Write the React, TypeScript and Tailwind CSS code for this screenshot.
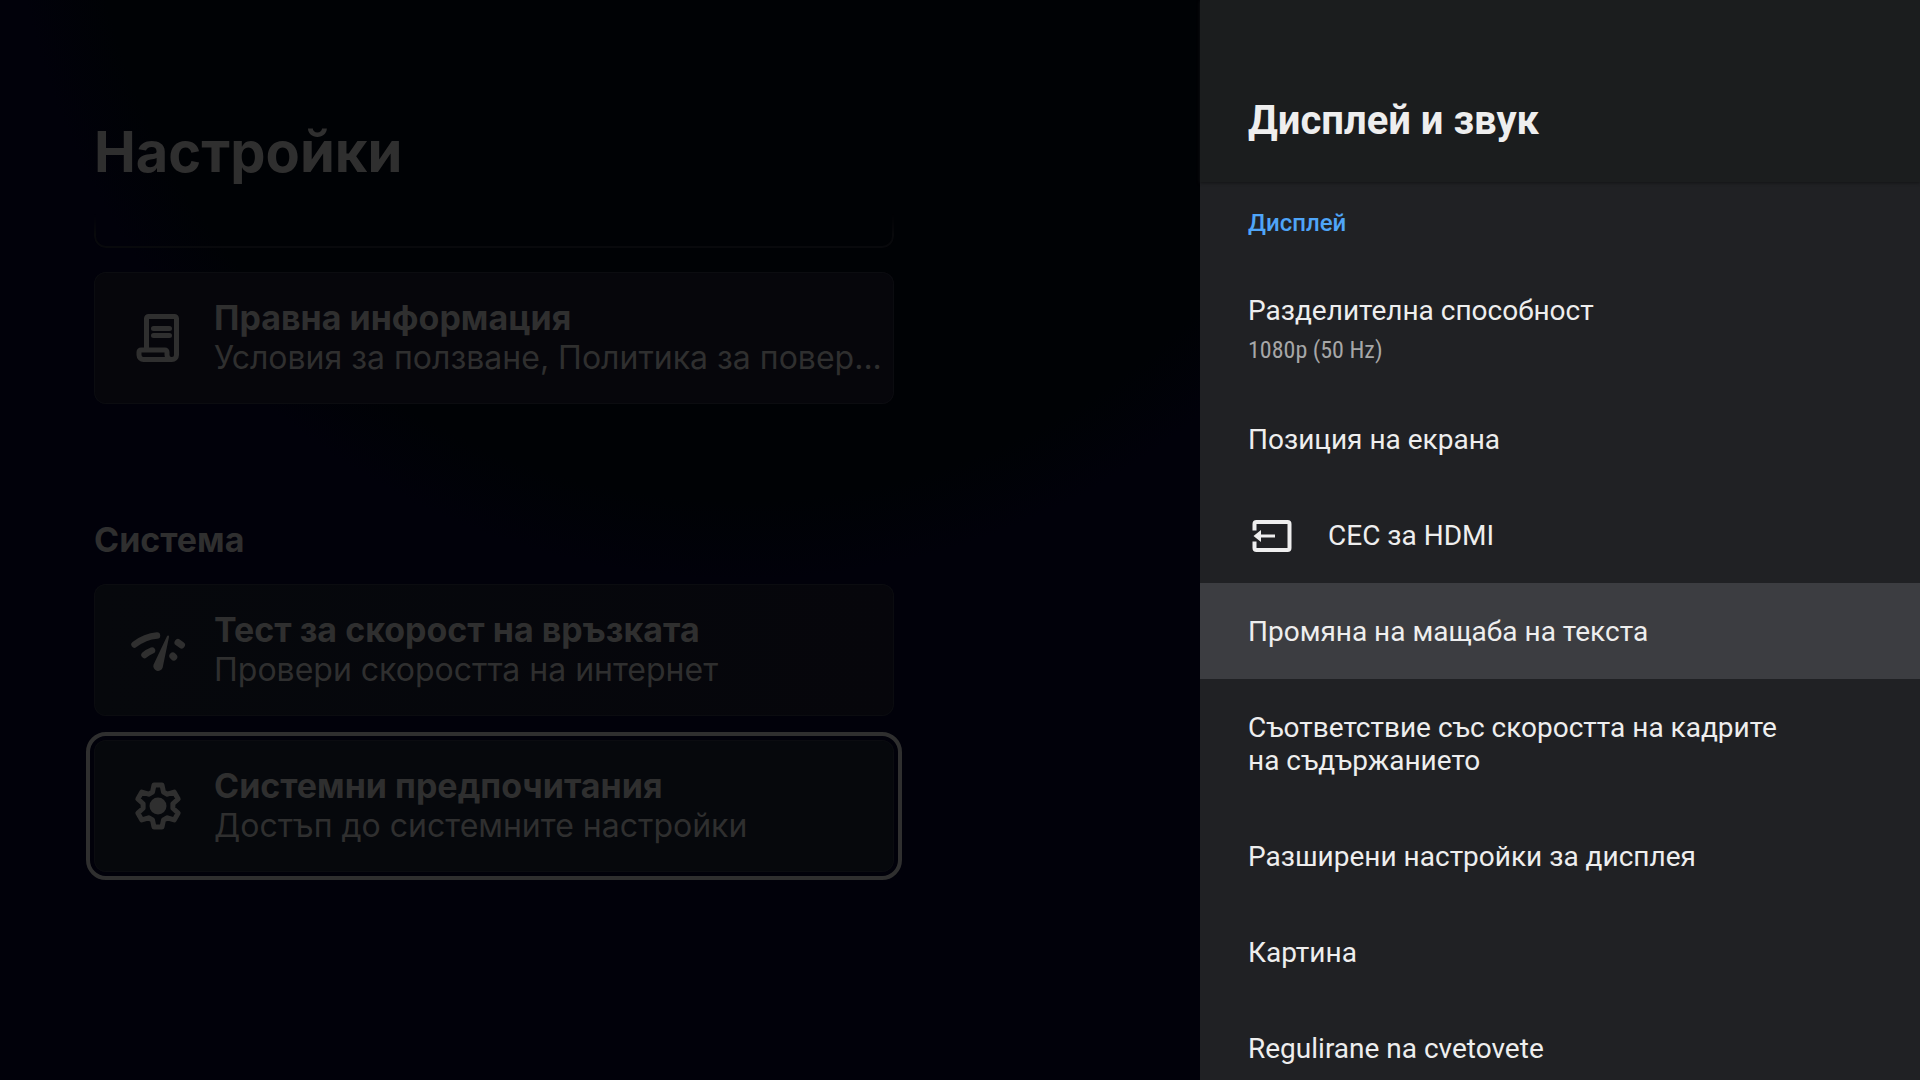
import type { ReactNode } from "react";

function ReceiptIcon() {
  return (
    <svg viewBox="0 0 48 48" className="size-12" fill="none" stroke="currentColor" strokeWidth="5" strokeLinecap="round" strokeLinejoin="round" aria-hidden="true">
      <path d="M12.5 35V4.5a2 2 0 0 1 2-2h26a2 2 0 0 1 2 2V41a4.5 4.5 0 0 1-4.5 4.5H9.500a4.500 4.500 0 0 1-4.500-4.500v-3a2 2 0 0 1 2-2h24a2 2 0 0 1 2 2v3a4.500 4.500 0 0 0 4.500 4.500" />
      <path d="M19.500 14.500h16M19.500 21.500h16" />
    </svg>
  );
}

function SpeedIcon() {
  return (
    <svg viewBox="0 0 56 56" className="size-14" fill="none" stroke="currentColor" strokeWidth="6.500" strokeLinecap="round" aria-hidden="true">
      <path d="M4.500 22.500Q15 14.500 27 13.500M14.500 33q3.500-3 7.500-4.500" />
      <path d="M48 20.500l3.500 2.500M42.800 34l1 1" strokeWidth="7" />
      <path d="M37 14.200c.6-1.300 2.400-.7 2 .8L32.700 45.500a4.800 4.800 0 0 1-9.200-2.800Z" fill="currentColor" stroke="none" />
    </svg>
  );
}

const gearPoints = [0, 60, 120, 180, 240, 300]
  .flatMap((deg) => {
    const a = (deg * Math.PI) / 180;
    return [[-5.5, -14], [-4, -21], [4, -21], [5.5, -14]].map(
      ([x, y]) => `${(x * Math.cos(a) - y * Math.sin(a)).toFixed(2)},${(x * Math.sin(a) + y * Math.cos(a)).toFixed(2)}`,
    );
  })
  .join(" ");

function GearIcon() {
  return (
    <svg viewBox="-24 -24 48 48" className="size-12" fill="none" stroke="currentColor" strokeWidth="5" strokeLinejoin="round" aria-hidden="true">
      <polygon points={gearPoints} />
      <circle r="8.500" fill="currentColor" stroke="none" />
    </svg>
  );
}

function InputIcon() {
  return (
    <svg viewBox="0 0 48 48" className="size-12 shrink-0" fill="none" stroke="currentColor" strokeWidth="4" aria-hidden="true">
      <path d="M6.500 18.500V12a2 2 0 0 1 2-2h31a2 2 0 0 1 2 2v24a2 2 0 0 1-2 2h-31a2 2 0 0 1-2-2v-6.500" />
      <path d="M27 24H12" strokeWidth="3" />
      <path d="M5.500 24l7.500-6v12Z" fill="currentColor" stroke="none" />
    </svg>
  );
}

function Card({ icon, title, text, tone, focused }: { icon: ReactNode; title: string; text: string; tone: string; focused?: boolean }) {
  return (
    <button
      type="button"
      className={`flex w-full items-center rounded-xl py-[26px] text-left inset-ring inset-ring-[#0b0c10] ${tone} ${
        focused ? "outline-4 outline-offset-4 outline-[#2f2f2f]" : ""
      }`}
    >
      <span className="flex w-[120px] shrink-0 justify-center pl-2">{icon}</span>
      <span className="min-w-0 flex-1">
        <span className="block text-[34px] leading-10 font-bold">{title}</span>
        <span className="block text-[32px] leading-10 whitespace-nowrap">{text}</span>
      </span>
    </button>
  );
}

function Row({ label, detail, icon, selected }: { label: string; detail?: string; icon?: ReactNode; selected?: boolean }) {
  return (
    <li>
      <button
        type="button"
        className={`flex w-full items-center gap-8 pt-8 pr-32 pl-12 text-left ${detail ? "pb-[26px]" : "pb-[31px]"} ${
          selected ? "bg-[#3c3d41]" : ""
        }`}
      >
        {icon && <span className="-my-2">{icon}</span>}
        <span>
          <span className="block text-[28px] leading-[33px]">{label}</span>
          {detail && (
            <span className="mt-2 block font-['Roboto_Condensed',Roboto,sans-serif] text-2xl leading-[30px] text-[#a6a7a8]">{detail}</span>
          )}
        </span>
      </button>
    </li>
  );
}

export default function App() {
  return (
    <div className="flex h-screen overflow-hidden bg-[#01010a]">
      <main
        lang="bg"
        className="w-5/8 bg-[radial-gradient(circle_at_740px_-150px,#000205_650px,#01010a_730px)] pt-[120px] pr-12 pl-[94px] font-[Inter,sans-serif] text-[#2f2f2f]"
      >
        <h1 className="text-[56px] leading-16 font-bold">Настройки</h1>
        <div className="mt-[30px] max-w-[800px]">
          <div className="h-[34px] overflow-hidden rounded-b-xl border-x-2 border-b-2 border-[#08090c] mask-t-from-40% mask-t-to-100%" />
          <div className="mt-6">
            <Card icon={<ReceiptIcon />} title="Правна информация" text="Условия за ползване, Политика за повер..." tone="bg-[#06060b]" />
          </div>
          <h2 className="mt-[116px] mb-6 text-[34px] leading-10 font-bold">Система</h2>
          <div className="flex flex-col gap-6">
            <Card icon={<SpeedIcon />} title="Тест за скорост на връзката" text="Провери скоростта на интернет" tone="bg-linear-to-r from-[#06080c] to-[#06060b]" />
            <Card icon={<GearIcon />} title="Системни предпочитания" text="Достъп до системните настройки" tone="bg-[#06080c]" focused />
          </div>
        </div>
      </main>

      <aside lang="bg" className="flex w-3/8 flex-col bg-[#202124] font-[Roboto,sans-serif] text-[#eeeeee]">
        <header className="z-10 bg-[#1b1d1e] px-12 pt-[97px] pb-[37px] shadow-[0_1px_3px_#131415]">
          <h2 className="text-[40px] leading-12 font-bold">Дисплей и звук</h2>
        </header>
        <section className="min-h-0 flex-1 overflow-hidden">
          <h3 className="px-12 pt-[27px] pb-[25px] text-2xl leading-7 font-medium text-[#4fa5f8]">Дисплей</h3>
          <ul>
            <Row label="Разделителна способност" detail="1080p (50 Hz)" />
            <Row label="Позиция на екрана" />
            <Row label="CEC за HDMI" icon={<InputIcon />} />
            <Row label="Промяна на мащаба на текста" selected />
            <Row label="Съответствие със скоростта на кадрите на съдържанието" />
            <Row label="Разширени настройки за дисплея" />
            <Row label="Картина" />
            <Row label="Regulirane na cvetovete" />
          </ul>
        </section>
      </aside>
    </div>
  );
}
